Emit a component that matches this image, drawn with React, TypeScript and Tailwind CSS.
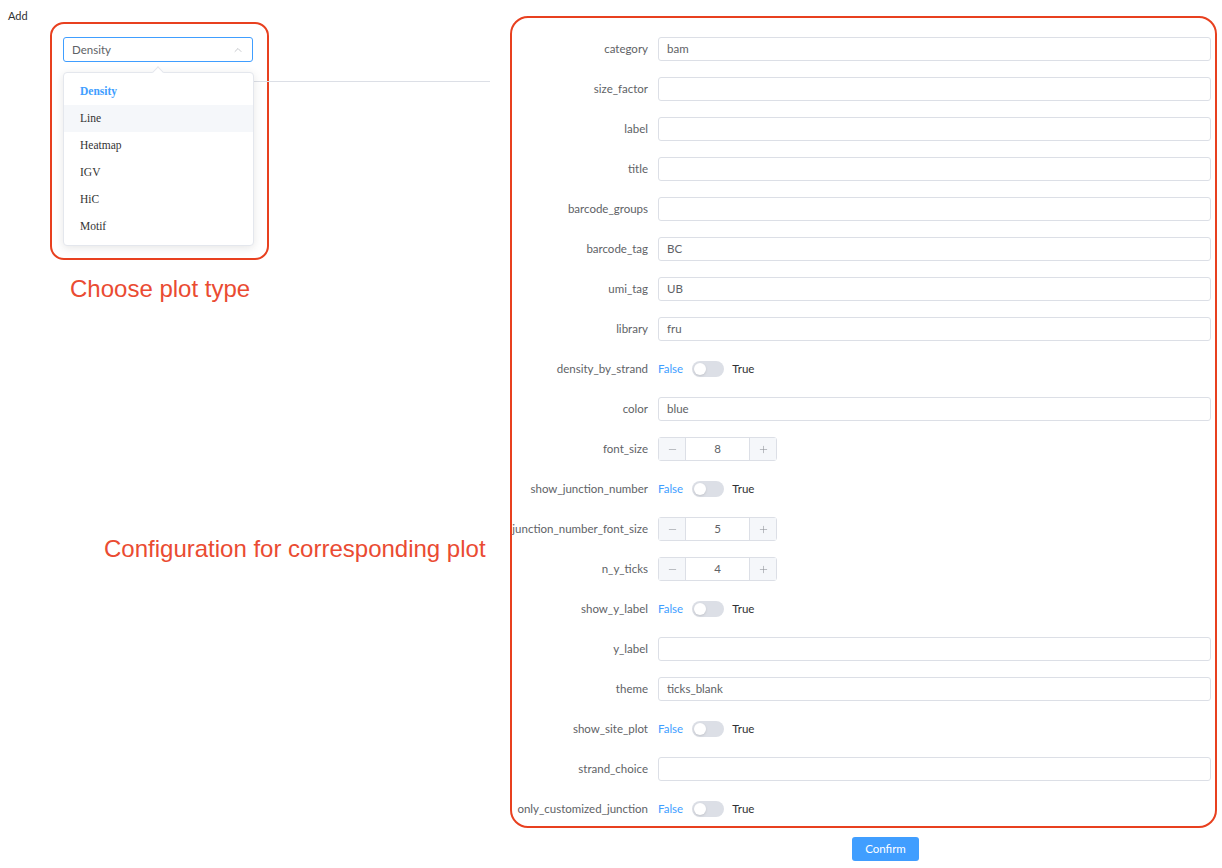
import { ChevronUp, Minus, Plus } from "lucide-react";

type Field =
  | { name: string; kind: "text"; value?: string }
  | { name: string; kind: "switch" }
  | { name: string; kind: "number"; value: number };

const fields: Field[] = [
  { name: "category", kind: "text", value: "bam" },
  { name: "size_factor", kind: "text" },
  { name: "label", kind: "text" },
  { name: "title", kind: "text" },
  { name: "barcode_groups", kind: "text" },
  { name: "barcode_tag", kind: "text", value: "BC" },
  { name: "umi_tag", kind: "text", value: "UB" },
  { name: "library", kind: "text", value: "fru" },
  { name: "density_by_strand", kind: "switch" },
  { name: "color", kind: "text", value: "blue" },
  { name: "font_size", kind: "number", value: 8 },
  { name: "show_junction_number", kind: "switch" },
  { name: "junction_number_font_size", kind: "number", value: 5 },
  { name: "n_y_ticks", kind: "number", value: 4 },
  { name: "show_y_label", kind: "switch" },
  { name: "y_label", kind: "text" },
  { name: "theme", kind: "text", value: "ticks_blank" },
  { name: "show_site_plot", kind: "switch" },
  { name: "strand_choice", kind: "text" },
  { name: "only_customized_junction", kind: "switch" },
];

const plotTypes = ["Density", "Line", "Heatmap", "IGV", "HiC", "Motif"];

function Toggle() {
  return (
    <div className="flex items-center h-6 text-[11.5px]">
      <span className="text-[#409eff]">False</span>
      <span className="ml-[9px] w-8 h-4 rounded-full bg-[#dcdfe6] flex items-center px-[2px]">
        <span className="w-3 h-3 rounded-full bg-white shadow-sm" />
      </span>
      <span className="ml-2 text-[#303133]">True</span>
    </div>
  );
}

function NumberBox({ value }: { value: number }) {
  return (
    <div className="flex h-6 w-[119px] border border-[#dcdfe6] rounded-[3px] text-[11.5px] text-[#606266]">
      <span className="w-[27px] flex items-center justify-center bg-[#f5f7fa] border-r border-[#dcdfe6] text-[#8a8d93]">
        <Minus size={11} strokeWidth={1.2} />
      </span>
      <span className="flex-1 flex items-center justify-center bg-white">{value}</span>
      <span className="w-[27px] flex items-center justify-center bg-[#f5f7fa] border-l border-[#dcdfe6] text-[#8a8d93]">
        <Plus size={11} strokeWidth={1.2} />
      </span>
    </div>
  );
}

export default function App() {
  return (
    <div
      className="w-[1222px] h-[868px] bg-white flex text-[#606266]"
      style={{ fontFamily: "Lato, 'Noto Sans', sans-serif" }}
    >
      {/* Left side */}
      <div className="w-[510px] shrink-0 pt-[10px]">
        <div className="pl-2 text-[11px] leading-[12px] text-[#303133]">Add</div>
        <div className="relative ml-[50px] w-[219px] h-[238px] border-2 border-[#e8401f] rounded-[14px] pl-[11px] pt-[13px]">
          <div className="w-[190px] h-[25px] border border-[#409eff] rounded-[3px] flex items-center justify-between px-2 text-[11.5px] text-[#606266] bg-white">
            <span>Density</span>
            <ChevronUp size={12} strokeWidth={1.3} className="text-[#a8abb2]" />
          </div>
          {/* divider behind the menu */}
          <div className="absolute left-[11px] top-[57px] w-[427px] h-px bg-[#dcdfe6]" />
          {/* menu */}
          <div className="absolute left-[11px] top-[48px] w-[191px] h-[174px] bg-white border border-[#e4e7ed] rounded-[4px] shadow-[0_2px_10px_rgba(0,0,0,0.1)] pt-[5px]">
            <span className="absolute -top-[5px] left-[90px] w-2 h-2 rotate-45 bg-white border-l border-t border-[#e4e7ed]" />
            {plotTypes.map((t, i) => (
              <div
                key={t}
                className={
                  "h-[27px] flex items-center px-4 text-[11.5px] " +
                  (i === 0
                    ? "text-[#409eff] font-bold"
                    : i === 1
                    ? "bg-[#f5f7fa] text-[#333]"
                    : "text-[#333]")
                }
                style={{ fontFamily: "'Liberation Serif', serif" }}
              >
                {t}
              </div>
            ))}
          </div>
        </div>
        <div
          className="ml-[70px] mt-[15px] text-[24px] leading-[28px] text-[#ea4b32]"
          style={{ fontFamily: "'Liberation Sans', Arial, sans-serif" }}
        >
          Choose plot type
        </div>
        <div
          className="ml-[104px] mt-[232px] text-[24px] leading-[28px] text-[#ea4b32]"
          style={{ fontFamily: "'Liberation Sans', Arial, sans-serif" }}
        >
          Configuration for corresponding plot
        </div>
      </div>

      {/* Right side */}
      <div className="pt-4">
        <div className="w-[707px] border-2 border-[#e8401f] rounded-[18px] pt-[19px] pb-[5px] pr-1 flex flex-col gap-4">
          {fields.map((f) => (
            <div key={f.name} className="flex items-center h-6">
              <div className="w-[136px] shrink-0 flex justify-end whitespace-nowrap text-[11.5px] text-[#606266]">
                {f.name}
              </div>
              <div className="ml-[10px] flex-1">
                {f.kind === "text" && (
                  <div className="h-6 border border-[#dcdfe6] rounded-[3px] flex items-center px-2 text-[11.5px] text-[#606266] bg-white">
                    {f.value ?? ""}
                  </div>
                )}
                {f.kind === "switch" && <Toggle />}
                {f.kind === "number" && <NumberBox value={f.value} />}
              </div>
            </div>
          ))}
        </div>
        <div className="ml-[342px] mt-[7px]">
          <button className="w-[67px] h-6 rounded-[3px] bg-[#409eff] text-white text-[11.5px]">
            Confirm
          </button>
        </div>
      </div>
    </div>
  );
}
